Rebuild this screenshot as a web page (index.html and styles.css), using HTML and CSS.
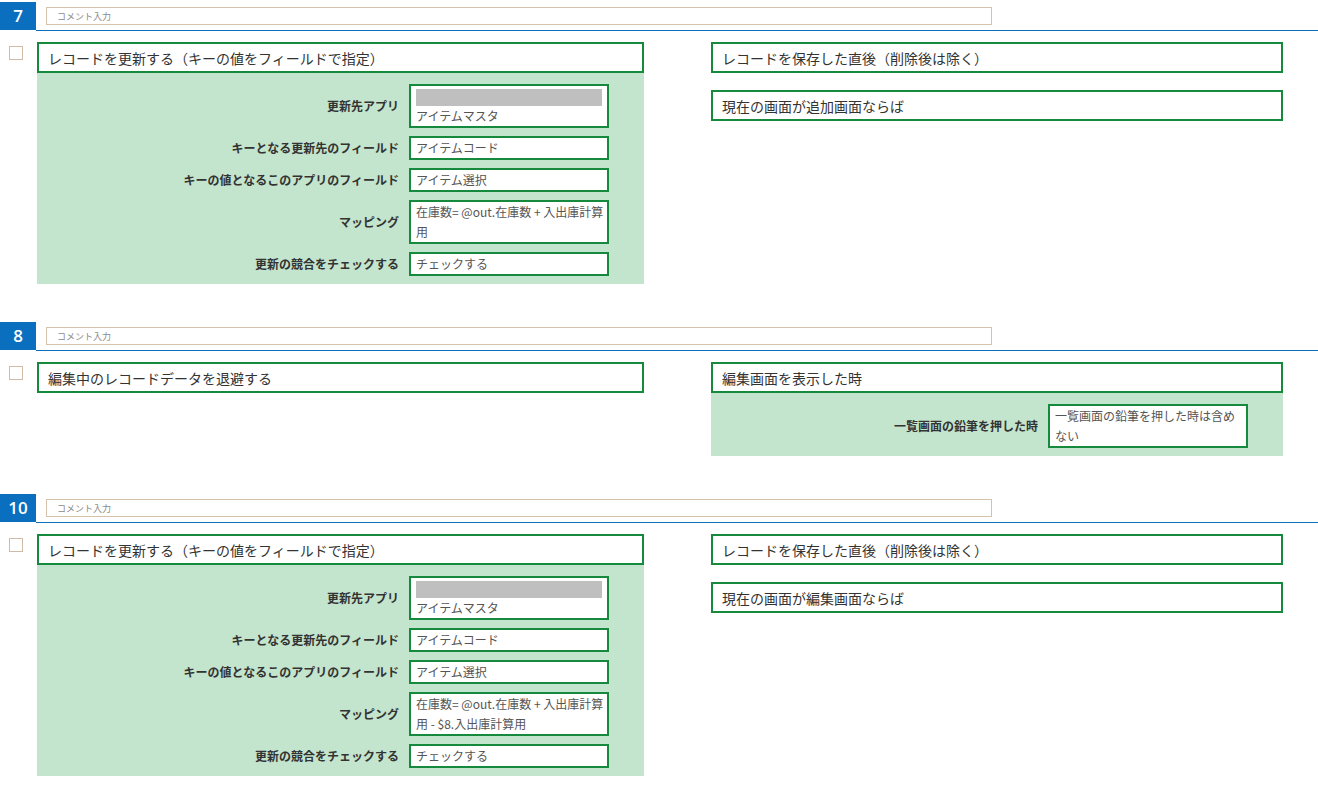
FILE: index.html
```html
<!DOCTYPE html>
<html lang="ja">
<head>
  <meta charset="UTF-8" />
  <meta name="viewport" content="width=device-width, initial-scale=1.0" />
  <title>アクション設定</title>
  <link rel="stylesheet" href="styles.css">
</head>
<body>
  <div class="step">
    <div class="step-head">
      <div class="step-no">7</div>
      <div class="step-bar"><input class="comment" type="text" placeholder="コメント入力" /></div>
    </div>
    <div class="step-body">
      <span class="check"></span>
      <div class="col-action">
        <div class="title-box">レコードを更新する（キーの値をフィールドで指定）</div>
        <div class="params">
          <div class="param">
            <div class="param-label">更新先アプリ</div>
            <div class="param-value"><div class="masked"></div>アイテムマスタ</div>
          </div>
          <div class="param">
            <div class="param-label">キーとなる更新先のフィールド</div>
            <div class="param-value">アイテムコード</div>
          </div>
          <div class="param">
            <div class="param-label">キーの値となるこのアプリのフィールド</div>
            <div class="param-value">アイテム選択</div>
          </div>
          <div class="param">
            <div class="param-label">マッピング</div>
            <div class="param-value">在庫数= @out.在庫数 + 入出庫計算用</div>
          </div>
          <div class="param">
            <div class="param-label">更新の競合をチェックする</div>
            <div class="param-value">チェックする</div>
          </div>
        </div>
      </div>
      <div class="col-cond">
        <div class="title-box">レコードを保存した直後（削除後は除く）</div>
        <div class="title-box">現在の画面が追加画面ならば</div>
      </div>
    </div>
  </div>

  <div class="step">
    <div class="step-head">
      <div class="step-no">8</div>
      <div class="step-bar"><input class="comment" type="text" placeholder="コメント入力" /></div>
    </div>
    <div class="step-body">
      <span class="check"></span>
      <div class="col-action">
        <div class="title-box">編集中のレコードデータを退避する</div>
      </div>
      <div class="col-cond">
        <div class="title-box">編集画面を表示した時</div>
        <div class="params">
          <div class="param">
            <div class="param-label">一覧画面の鉛筆を押した時</div>
            <div class="param-value">一覧画面の鉛筆を押した時は含めない</div>
          </div>
        </div>
      </div>
    </div>
  </div>

  <div class="step">
    <div class="step-head">
      <div class="step-no">10</div>
      <div class="step-bar"><input class="comment" type="text" placeholder="コメント入力" /></div>
    </div>
    <div class="step-body">
      <span class="check"></span>
      <div class="col-action">
        <div class="title-box">レコードを更新する（キーの値をフィールドで指定）</div>
        <div class="params">
          <div class="param">
            <div class="param-label">更新先アプリ</div>
            <div class="param-value"><div class="masked"></div>アイテムマスタ</div>
          </div>
          <div class="param">
            <div class="param-label">キーとなる更新先のフィールド</div>
            <div class="param-value">アイテムコード</div>
          </div>
          <div class="param">
            <div class="param-label">キーの値となるこのアプリのフィールド</div>
            <div class="param-value">アイテム選択</div>
          </div>
          <div class="param">
            <div class="param-label">マッピング</div>
            <div class="param-value">在庫数= @out.在庫数 + 入出庫計算用 - $8.入出庫計算用</div>
          </div>
          <div class="param">
            <div class="param-label">更新の競合をチェックする</div>
            <div class="param-value">チェックする</div>
          </div>
        </div>
      </div>
      <div class="col-cond">
        <div class="title-box">レコードを保存した直後（削除後は除く）</div>
        <div class="title-box">現在の画面が編集画面ならば</div>
      </div>
    </div>
  </div>
</body>
</html>
```

FILE: styles.css
```css
html, body {
  margin: 0;
  padding: 0;
  background: #fff;
  color: #333;
  font-family: 'Noto Sans CJK JP', 'Noto Sans', sans-serif;
}
body {
  padding-top: 2px;
}
.step {
  margin-bottom: 38px;
}
.step-head {
  display: flex;
}
.step-no {
  width: 36px;
  height: 28px;
  background: #0b6fc0;
  color: #fff;
  font-family: 'Open Sans', 'Liberation Sans', sans-serif;
  font-size: 17px;
  font-weight: 600;
  line-height: 28px;
  text-align: center;
}
.step-bar {
  flex: 1;
  height: 28px;
  border-bottom: 1px solid #0b6fc0;
}
.comment {
  display: block;
  box-sizing: border-box;
  width: 946px;
  height: 18px;
  margin: 5px 0 0 10px;
  padding: 0 10px;
  border: 1px solid #d6c2ab;
  font-family: inherit;
  font-size: 9px;
  outline: none;
}
.comment::placeholder {
  color: #8a8a8a;
}
.step-body {
  display: flex;
  align-items: flex-start;
  padding: 11px 0 0 9px;
}
.check {
  box-sizing: border-box;
  width: 14px;
  height: 14px;
  margin-top: 4px;
  border: 1px solid #d0bca6;
  background: #fff;
}
.col-action {
  width: 607px;
  margin-left: 14px;
}
.col-cond {
  width: 572px;
  margin-left: 67px;
}
.col-cond .title-box + .title-box {
  margin-top: 17px;
}
.title-box {
  box-sizing: border-box;
  height: 31px;
  padding: 2px 9px 0;
  border: 2px solid #168a3c;
  background: #fff;
  font-size: 14px;
  line-height: 25px;
  white-space: nowrap;
}
.params {
  display: flex;
  flex-direction: column;
  gap: 8px;
  padding: 11px 35px 8px 0;
  background: #c4e5cd;
}
.param {
  display: flex;
  align-items: center;
}
.param-label {
  flex: 1;
  margin-right: 10px;
  text-align: right;
  font-size: 12px;
  font-weight: bold;
  color: #333;
  line-height: 20px;
}
.param-value {
  box-sizing: border-box;
  width: 200px;
  padding: 1px 0 0 5px;
  border: 2px solid #168a3c;
  background: #fff;
  color: #555;
  font-size: 12px;
  line-height: 20px;
}
.param-value:not(:has(.masked)) {
  padding-top: 0;
}
.masked {
  height: 17px;
  margin: 2px 5px 0 0;
  background: #bfbfbf;
}
```
